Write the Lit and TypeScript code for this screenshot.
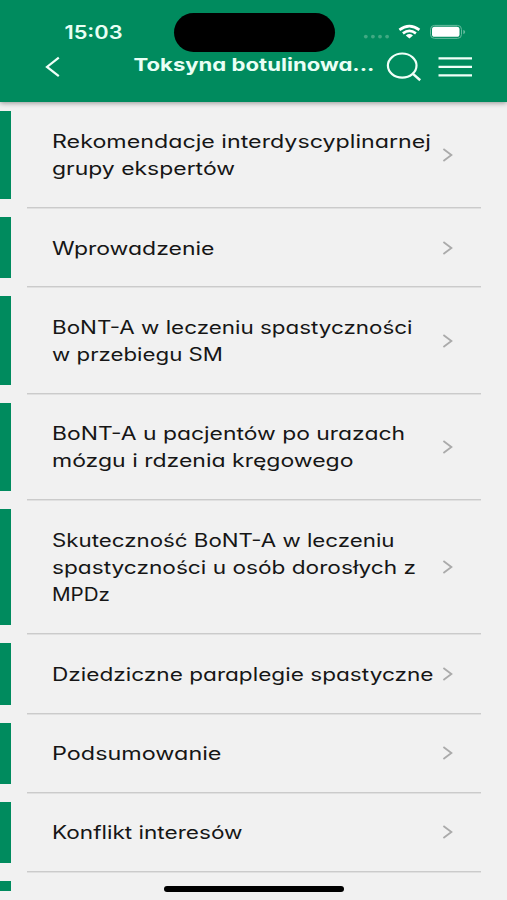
import { LitElement, html, svg, css } from "lit";
import { customElement, property } from "lit/decorators.js";

/** One printed line of a label, with the width it is set to. */
interface Line {
  text: string;
  width: number;
}

const LINE_HEIGHT = 27.4;

const CHAPTERS: Line[][] = [
  [
    { text: "Rekomendacje interdyscyplinarnej", width: 379 },
    { text: "grupy ekspertów", width: 183 },
  ],
  [{ text: "Wprowadzenie", width: 162.5 }],
  [
    { text: "BoNT-A w leczeniu spastyczności", width: 360.5 },
    { text: "w przebiegu SM", width: 171 },
  ],
  [
    { text: "BoNT-A u pacjentów po urazach", width: 353 },
    { text: "mózgu i rdzenia kręgowego", width: 301.5 },
  ],
  [
    { text: "Skuteczność BoNT-A w leczeniu", width: 342.5 },
    { text: "spastyczności u osób dorosłych z", width: 364 },
    { text: "MPDz", width: 58 },
  ],
  [{ text: "Dziedziczne paraplegie spastyczne", width: 381.5 }],
  [{ text: "Podsumowanie", width: 169.5 }],
  [{ text: "Konflikt interesów", width: 190.5 }],
];

@customElement("chapter-row")
export class ChapterRow extends LitElement {
  @property({ attribute: false }) lines: Line[] = [];

  static styles = css`
    :host {
      display: flex;
      flex: none;
      box-sizing: border-box;
    }
    .marker {
      flex: none;
      width: 11px;
      margin: 9px 16px 9px 0;
      background: #008b5e;
    }
    .body {
      flex: none;
      box-sizing: border-box;
      width: 454px;
      display: flex;
      align-items: center;
      padding: 25.5px 28px 25.25px 25px;
      border-bottom: 1px solid #cbcbcb;
      box-shadow: 0 1px 0 #e0e0e0;
    }
    .label {
      display: block;
      flex: none;
      width: 390px;
      overflow: visible;
      font: 400 18.2px Inter, "Open Sans", sans-serif;
      font-feature-settings: "cv11" 1, "ss03" 1;
      fill: #161616;
    }
    .chevron {
      flex: none;
      width: 11px;
      height: 16px;
      margin-top: 0.8px;
      fill: none;
      stroke: #aaa;
      stroke-width: 1.8;
    }
  `;

  render() {
    const height = this.lines.length * LINE_HEIGHT;
    return html`
      <div class="marker"></div>
      <div class="body">
        <svg class="label" height=${height}>
          ${this.lines.map(
            (line, i) => svg`<text x="0" y=${20.6 + i * LINE_HEIGHT}
              textLength=${line.width} lengthAdjust="spacingAndGlyphs">${line.text}</text>`
          )}
        </svg>
        <svg class="chevron" viewBox="0 0 11 16"><path d="M1.4 2 9.4 8 1.4 14" /></svg>
      </div>
    `;
  }
}

@customElement("app-root")
export class AppRoot extends LitElement {
  static styles = css`
    :host {
      display: flex;
      flex-direction: column;
      position: relative;
      width: 507px;
      height: 900px;
      overflow: hidden;
      background: #f1f1f1;
      font-family: Inter, "Open Sans", sans-serif;
    }
    .header {
      flex: none;
      position: relative;
      height: 101.7px;
      background: #008b5e;
      box-shadow: 0 1px 5px rgba(0, 0, 0, 0.4);
      z-index: 1;
    }
    .status {
      display: flex;
      height: 52px;
      align-items: flex-start;
    }
    .time {
      display: block;
      width: 60px;
      height: 24px;
      margin: 20px 0 0 64px;
      overflow: visible;
      font: 600 18.4px Inter, sans-serif;
      fill: #e9fff4;
    }
    .island {
      width: 161px;
      height: 38.5px;
      margin: 13px 0 0 49.5px;
      border-radius: 20px;
      background: #000;
    }
    .signals {
      width: 104px;
      height: 24px;
      margin: 20px 0 0 28.5px;
    }
    .nav {
      display: flex;
      height: 49px;
    }
    .back {
      width: 16px;
      height: 22px;
      margin: 4px 0 0 45px;
    }
    .title {
      display: block;
      width: 240px;
      height: 30px;
      margin-left: 72.5px;
      overflow: visible;
      font: 700 17.8px Inter, sans-serif;
      font-feature-settings: "cv11" 1;
      fill: #eafff5;
    }
    .search {
      width: 36px;
      height: 32px;
      margin-left: 12.5px;
    }
    .menu {
      width: 34px;
      height: 24px;
      margin: 3px 0 0 16px;
    }
    .line {
      fill: none;
      stroke: #f0fff8;
      stroke-width: 2.2;
    }
    .list {
      display: flex;
      flex-direction: column;
    }
    .next {
      width: 11px;
      height: 10.5px;
      margin-top: 9px;
      background: #008b5e;
    }
    .home {
      position: absolute;
      left: 164px;
      top: 886px;
      width: 180px;
      height: 5.5px;
      border-radius: 3px;
      background: #000;
    }
  `;

  render() {
    return html`
      <div class="header">
        <div class="status">
          <svg class="time">
            <text x="0.5" y="18.8" textLength="58" lengthAdjust="spacingAndGlyphs">15:03</text>
          </svg>
          <div class="island"></div>
          <svg class="signals" viewBox="363 20 104 24">
            <g fill="#40a983">
              <circle cx="365.8" cy="36.6" r="1.9" />
              <circle cx="372.9" cy="36.6" r="1.9" />
              <circle cx="380" cy="36.6" r="1.9" />
              <circle cx="387.1" cy="36.6" r="1.9" />
            </g>
            <g fill="none" stroke="#fff" stroke-width="2.6">
              <path d="M399.4 29.9Q409.4 22.3 419.4 29.9" />
              <path d="M402.9 33.4Q409.4 28.4 415.9 33.4" />
            </g>
            <path d="M405.8 35.5Q409.4 32.7 413 35.5L409.4 38.4Z" fill="#fff" />
            <rect x="430.5" y="25.4" width="31" height="13" rx="4" fill="none" stroke="#66bb9e" />
            <rect x="432" y="26.8" width="27.5" height="10" rx="2.6" fill="#fff" />
            <path d="M463.3 29.8Q465.2 30.6 465.2 32T463.3 34.2Z" fill="#66bb9e" />
          </svg>
        </div>
        <div class="nav">
          <svg class="back line" viewBox="45 56 16 22"><path d="M58.8 57.6 47 66.9 58.8 76.2" /></svg>
          <svg class="title">
            <text x="-0.5" y="19.4" textLength="241" lengthAdjust="spacingAndGlyphs">Toksyna botulinowa...</text>
          </svg>
          <svg class="search line" viewBox="386 52 36 32">
            <ellipse cx="402.2" cy="65.6" rx="14.3" ry="12.1" />
            <path d="M412.4 73.4 420.2 80.2" stroke-width="2.5" />
          </svg>
          <svg class="menu line" viewBox="438 55 34 24">
            <path d="M438.5 58.4H472M438.5 66.9H472M438.5 75.4H472" />
          </svg>
        </div>
      </div>
      <div class="list">
        ${CHAPTERS.map((lines) => html`<chapter-row .lines=${lines}></chapter-row>`)}
        <div class="next"></div>
      </div>
      <div class="home"></div>
    `;
  }
}
